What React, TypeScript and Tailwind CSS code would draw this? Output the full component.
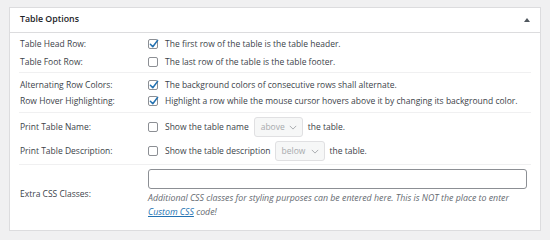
import React from "react";

const font = { fontFamily: '"Open Sans", "Noto Sans", sans-serif' };

function Check({ checked }: { checked?: boolean }) {
  return (
    <span className="relative inline-flex h-[10px] w-[10px] shrink-0 items-center justify-center rounded-[2px] border border-[#8c8f94] bg-white">
      {checked && (
        <svg viewBox="0 0 20 20" className="absolute left-[-1px] top-[-2px] h-[12px] w-[12px]">
          <path d="M4 10.5 L8 14.5 L16 4" fill="none" stroke="#2271b1" strokeWidth="2.6" strokeLinecap="round" strokeLinejoin="round" />
        </svg>
      )}
    </span>
  );
}

function Sel({ value, w }: { value: string; w: string }) {
  return (
    <span className={`inline-flex h-[20px] ${w} items-center justify-between rounded-[3px] border border-[#e0e0e2] bg-[#f6f7f7] pl-[6px] pr-[5px] text-[#a7aaad]`}>
      <span>{value}</span>
      <svg viewBox="0 0 10 6" className="h-[5px] w-[8px]">
        <path d="M1 1 L5 5 L9 1" fill="none" stroke="#a7aaad" strokeWidth="1.2" />
      </svg>
    </span>
  );
}

export default function App() {
  return (
    <div className="h-[240px] w-[550px] bg-[#f0f0f1] pl-[9px] pr-[9px] pt-[7px] text-[8.5px] text-[#3c434a]" style={font}>
      <div className="h-[224px] border border-[#dcdcde] bg-white">
        <div className="flex h-[25px] items-center justify-between border-b border-[#dcdcde] pl-[10px] pr-[10px]">
          <span className="text-[8.8px] font-semibold text-[#1d2327]">Table Options</span>
          <svg viewBox="0 0 6 4" className="h-[4px] w-[6px]">
            <path d="M0 4 L3 0 L6 4 Z" fill="#50575e" />
          </svg>
        </div>
        <div className="px-[9px]">
          <div className="border-b border-[#f0f0f1] pb-[1px] pt-[2px]">
            <div className="flex h-[18px] items-center">
              <span className="w-[129px] pl-[1px]">Table Head Row:</span>
              <Check checked />
              <span className="ml-[7px]">The first row of the table is the table header.</span>
            </div>
            <div className="flex h-[18px] items-center">
              <span className="w-[129px] pl-[1px]">Table Foot Row:</span>
              <Check />
              <span className="ml-[7px]">The last row of the table is the table footer.</span>
            </div>
          </div>
          <div className="border-b border-[#f0f0f1] pb-[3px] pt-[4px]">
            <div className="flex h-[16px] items-center">
              <span className="w-[129px] pl-[1px]">Alternating Row Colors:</span>
              <Check checked />
              <span className="ml-[7px]">The background colors of consecutive rows shall alternate.</span>
            </div>
            <div className="flex h-[16px] items-center">
              <span className="w-[129px] pl-[1px]">Row Hover Highlighting:</span>
              <Check checked />
              <span className="ml-[7px] whitespace-nowrap">Highlight a row while the mouse cursor hovers above it by changing its background color.</span>
            </div>
          </div>
          <div className="border-b border-[#f0f0f1] pb-[1px] pt-[2px]">
            <div className="flex h-[24px] items-center">
              <span className="w-[129px] pl-[1px]">Print Table Name:</span>
              <Check />
              <span className="ml-[7px] mr-[5px]">Show the table name</span>
              <Sel value="above" w="w-[49px]" />
              <span className="ml-[5px]">the table.</span>
            </div>
            <div className="flex h-[24px] items-center">
              <span className="w-[129px] pl-[1px]">Print Table Description:</span>
              <Check />
              <span className="ml-[7px] mr-[4px]">Show the table description</span>
              <Sel value="below" w="w-[50px]" />
              <span className="ml-[5px]">the table.</span>
            </div>
          </div>
          <div className="flex pt-[4px]">
            <span className="flex w-[129px] items-center pl-[1px]">Extra CSS Classes:</span>
            <div className="flex-1 pr-[4px]">
              <div className="h-[20px] rounded-[3px] border border-[#8c8f94] bg-white" />
              <div className="mt-[2px] text-[8.8px] leading-[14px] italic text-[#646970]">
                Additional CSS classes for styling purposes can be entered here. This is NOT the place to enter
                <br />
                <span className="text-[#2271b1] underline">Custom CSS</span> code!
              </div>
            </div>
          </div>
        </div>
      </div>
    </div>
  );
}
